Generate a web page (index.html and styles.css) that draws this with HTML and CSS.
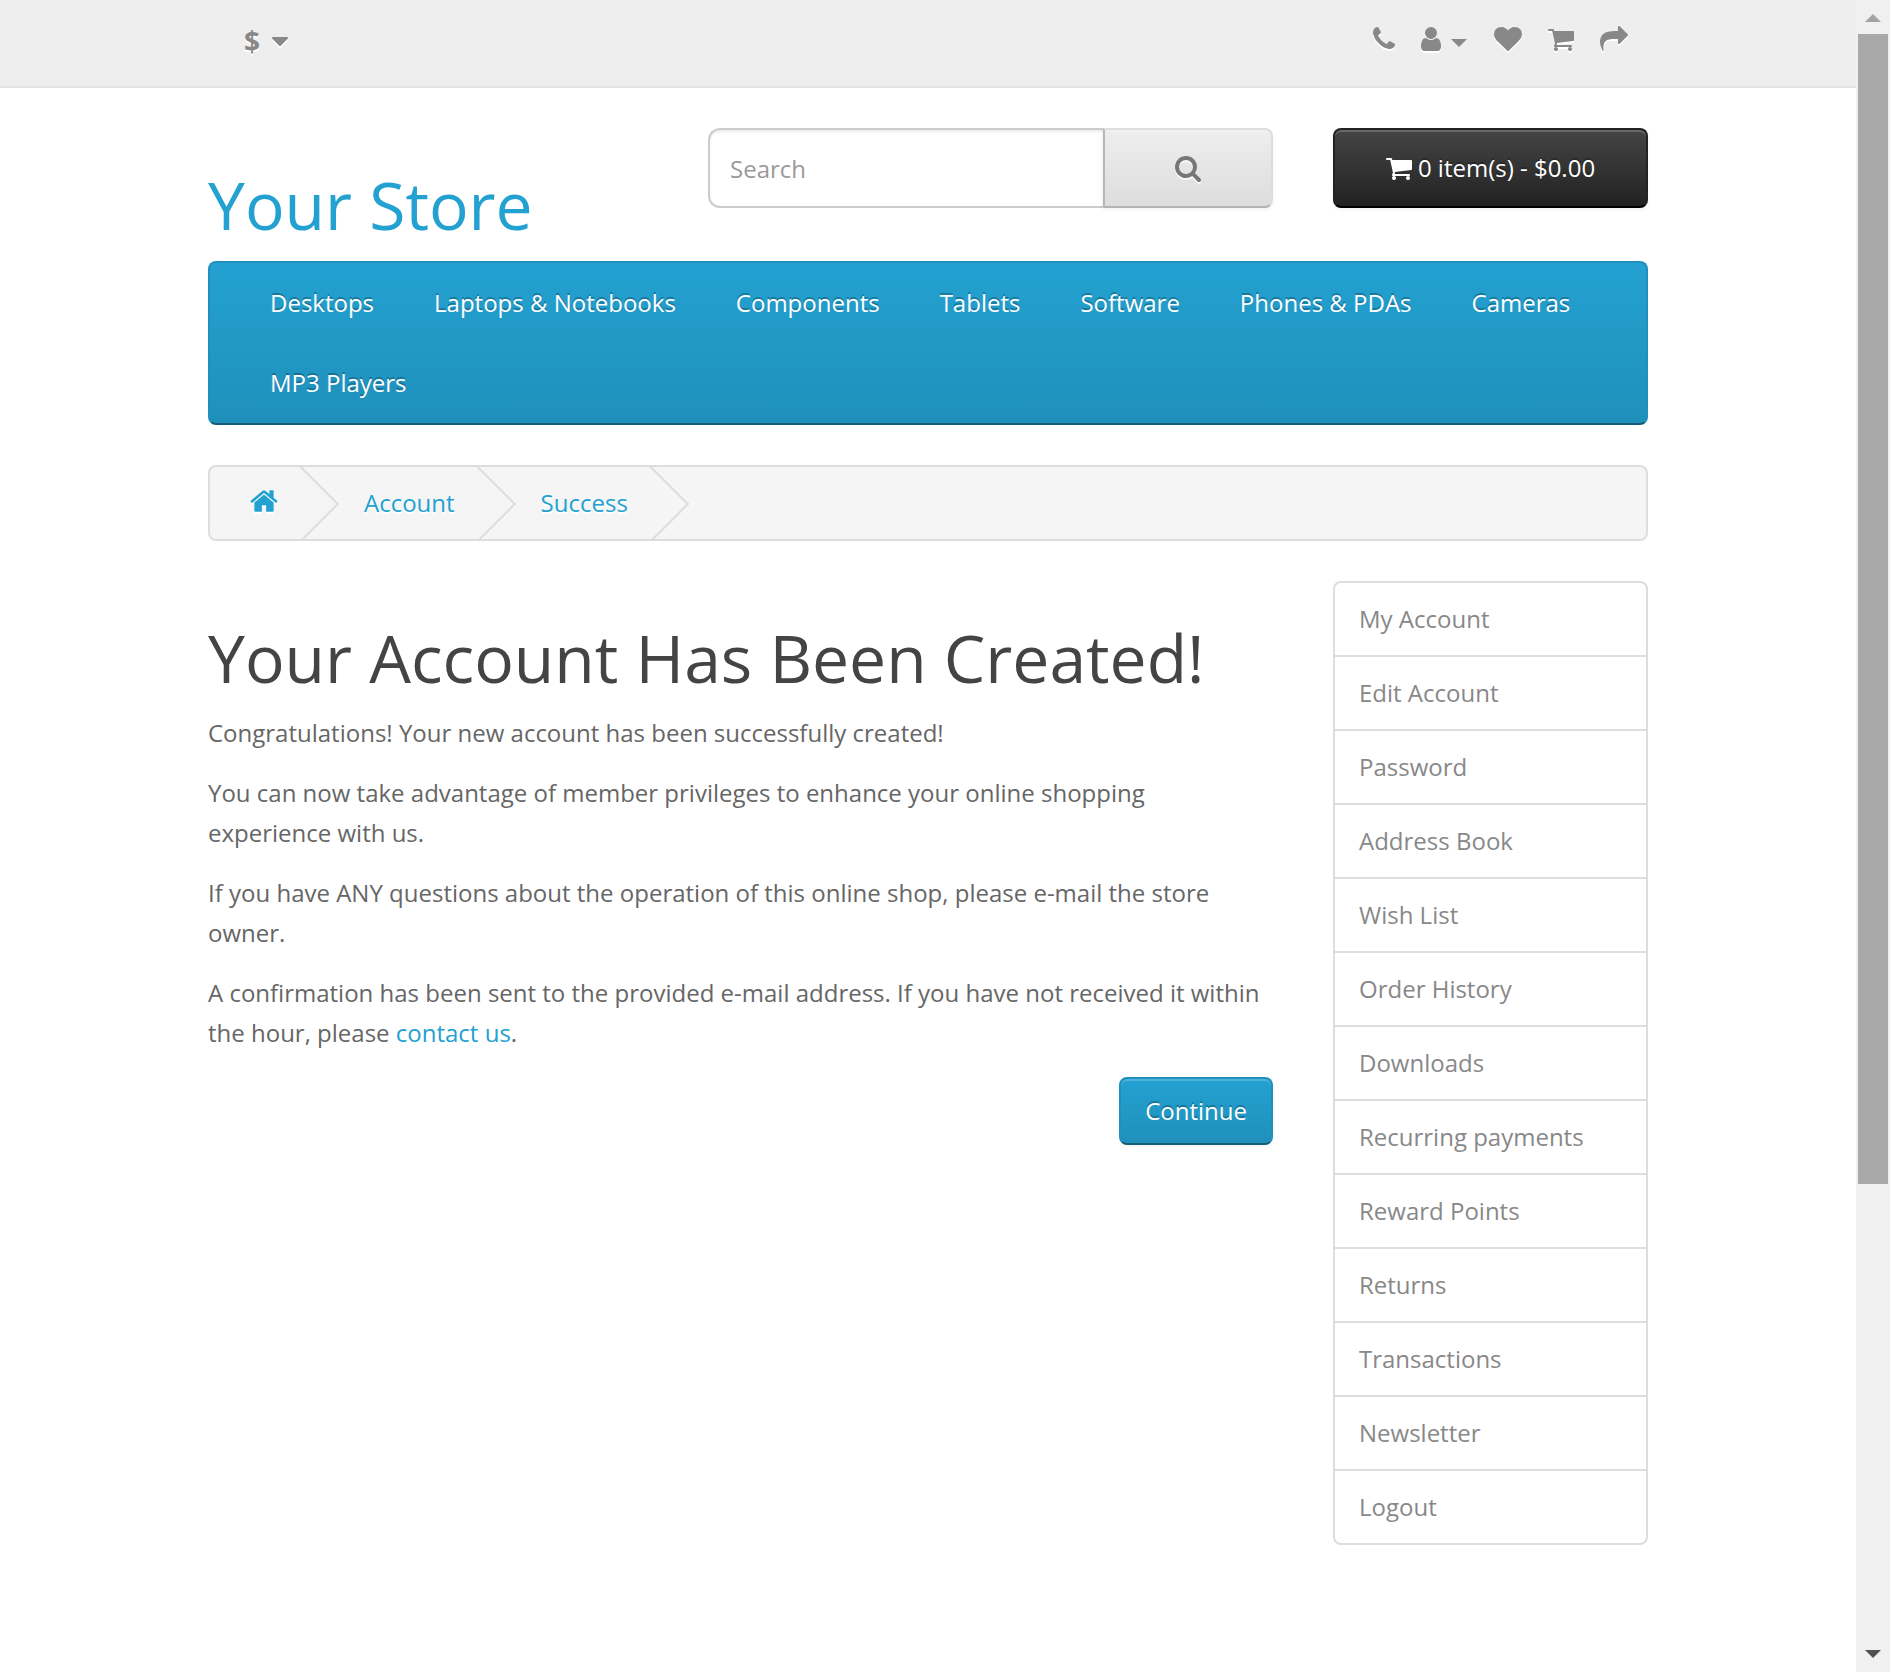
FILE: index.html
```html
<!DOCTYPE html>
<html lang="en">
<head>
<meta charset="utf-8">
<meta name="viewport" content="width=device-width, initial-scale=1">
<title>Your Account Has Been Created!</title>
<link rel="stylesheet" href="styles.css">
</head>
<body>
<svg class="sprite" aria-hidden="true">
  <symbol id="cart" viewBox="64 0 1664 1792"><path d="M704 1536q0 52-38 90t-90 38-90-38-38-90 38-90 90-38 90 38 38 90zm896 0q0 52-38 90t-90 38-90-38-38-90 38-90 90-38 90 38 38 90zm128-1088v512q0 24-16.500 42.500t-40.500 21.500l-1044 122q13 60 13 70 0 16-24 64h920q26 0 45 19t19 45-19 45-45 19h-1024q-26 0-45-19t-19-45q0-11 8-31.500t16-36 21.500-40 15.500-29.500l-177-823h-204q-26 0-45-19t-19-45 19-45 45-19h256q16 0 28.500 6.500t19.500 15.500 13 24.500 8 26 5.500 29.500 4.500 26h1201q26 0 45 19t19 45z"/></symbol>
</svg>

<div class="page">
  <nav class="top" aria-label="Account and currency">
    <div class="container top-row">
      <button class="currency" type="button" aria-label="Currency"><strong>$</strong>
        <svg class="caret-icon" viewBox="384 0 1024 1792" aria-hidden="true"><path d="M1408 704q0 26-19 45l-448 448q-19 19-45 19t-45-19l-448-448q-19-19-19-45t19-45 45-19h896q26 0 45 19t19 45z"/></svg>
      </button>
      <ul class="top-links">
        <li><a href="#contact" aria-label="Contact us"><svg class="icon-phone" viewBox="192 0 1408 1792"><path d="M1600 1240q0 27-10 70.500t-21 68.500q-21 50-122 106-94 51-186 51-27 0-53-3.500t-57.500-12.500-47-14.500-55.500-20.500-49-18q-98-35-175-83-127-79-264-216t-216-264q-48-77-83-175-3-9-18-49t-20.500-55.500-14.500-47-12.500-57.500-3.500-53q0-92 51-186 56-101 106-122 25-11 68.500-21t70.500-10q14 0 21 3 18 6 53 76 11 19 30 54t35 63.500 31 53.500q3 4 17.500 25t21.500 35.500 7 28.500q0 20-28.500 50t-62 55-62 53-28.500 46q0 9 5 22.500t8.500 20.500 14 24 11.500 19q76 137 174 235t235 174q2 1 19 11.500t24 14 20.500 8.500 22.500 5q18 0 46-28.500t53-62 55-62 50-28.500q14 0 28.500 7t35.500 21.500 25 17.500q25 15 53.500 31t63.500 35 54 30q70 35 76 53 3 7 3 21z"/></svg></a></li>
        <li><a href="#account" aria-label="My Account"><svg class="icon-user" viewBox="256 0 1280 1792"><path d="M1536 1399q0 109-62.500 187t-150.500 78h-854q-88 0-150.500-78t-62.500-187q0-85 8.500-160.500t31.500-152 58.500-131 94-89 134.500-34.500q131 128 313 128t313-128q76 0 134.500 34.500t94 89 58.500 131 31.500 152 8.500 160.500zm-256-887q0 159-112.500 271.500t-271.500 112.500-271.500-112.500-112.500-271.500 112.500-271.500 271.500-112.500 271.500 112.500 112.500 271.500z"/></svg><span class="caret"></span></a></li>
        <li><a href="#wishlist" aria-label="Wish List"><svg class="icon-wide" viewBox="0 0 1792 1792"><path d="M896 1664q-26 0-44-18l-624-602q-10-8-27.500-26t-55.500-65.500-68-97.500-53.500-121-23.500-138q0-220 127-344t351-124q62 0 126.500 21.500t120 58 95.500 68.500 76 68q36-36 76-68t95.500-68.500 120-58 126.500-21.500q224 0 351 124t127 344q0 221-229 450l-623 600q-18 18-44 18z"/></svg></a></li>
        <li><a href="#cart-page" aria-label="Shopping Cart"><svg class="icon"><use href="#cart"/></svg></a></li>
        <li><a href="#checkout" aria-label="Checkout"><svg class="icon-wide" viewBox="0 0 1792 1792"><path d="M1792 640q0 26-19 45l-512 512q-19 19-45 19t-45-19-19-45v-256h-224q-98 0-175.500 6t-154 21.500-133 42.500-105.500 69.500-80 101-48.500 138.500-17.500 181q0 55 5 123 0 6 2.500 23.500t2.500 26.500q0 15-8.500 25t-23.500 10q-16 0-28-17-7-9-13-22t-13.500-30-10.500-24q-127-285-127-451 0-199 53-333 162-403 875-403h224v-256q0-26 19-45t45-19 45 19l512 512q19 19 19 45z"/></svg></a></li>
      </ul>
    </div>
  </nav>

  <div class="container">
    <header class="header">
      <div class="logo"><a href="#home">Your Store</a></div>
      <form class="search" role="search">
        <input type="text" placeholder="Search" aria-label="Search">
        <button type="button" aria-label="Search"><svg class="icon" viewBox="64 0 1664 1792"><path d="M1216 832q0-185-131.500-316.500t-316.500-131.500-316.500 131.500-131.500 316.500 131.500 316.500 316.500 131.500 316.500-131.500 131.500-316.500zm512 832q0 52-38 90t-90 38q-54 0-90-38l-343-342q-179 124-399 124-143 0-273.500-55.500t-225-150-150-225-55.500-273.500 55.500-273.500 150-225 225-150 273.500-55.500 273.500 55.500 225 150 150 225 55.500 273.500q0 220-124 399l343 343q37 37 37 90z"/></svg></button>
      </form>
      <button class="cart-button" type="button"><svg class="icon"><use href="#cart"/></svg><span>0 item(s) - $0.00</span></button>
    </header>

    <nav class="menu" aria-label="Categories">
      <a href="#desktops">Desktops</a>
      <a href="#laptops">Laptops &amp; Notebooks</a>
      <a href="#components">Components</a>
      <a href="#tablets">Tablets</a>
      <a href="#software">Software</a>
      <a href="#phones">Phones &amp; PDAs</a>
      <a href="#cameras">Cameras</a>
      <a href="#mp3">MP3 Players</a>
    </nav>

    <ol class="breadcrumb">
      <li><a href="#home" aria-label="Home"><svg class="icon-home" viewBox="64 0 1664 1792"><path d="M1472 992v480q0 26-19 45t-45 19h-384v-384h-256v384h-384q-26 0-45-19t-19-45v-480q0-1 .5-3t.5-3l575-474 575 474q1 2 1 6zm223-69l-62 74q-8 9-21 11h-3q-13 0-21-7l-692-577-692 577q-12 8-24 7-13-2-21-11l-62-74q-8-10-7-23.500t11-21.500l719-599q32-26 76-26t76 26l244 204v-195q0-14 9-23t23-9h192q14 0 23 9t9 23v408l219 182q10 8 11 21.500t-7 23.500z"/></svg></a></li>
      <li><a href="#account">Account</a></li>
      <li><a href="#success">Success</a></li>
    </ol>

    <div class="columns">
      <main class="content">
        <h1>Your Account Has Been Created!</h1>
        <p>Congratulations! Your new account has been successfully created!</p>
        <p>You can now take advantage of member privileges to enhance your online shopping experience with us.</p>
        <p>If you have ANY questions about the operation of this online shop, please e-mail the store owner.</p>
        <p>A confirmation has been sent to the provided e-mail address. If you have not received it within the hour, please <a href="#contact">contact us</a>.</p>
        <div class="buttons"><a class="continue" href="#account">Continue</a></div>
      </main>
      <nav class="side" aria-label="Account">
        <a href="#my-account">My Account</a>
        <a href="#edit">Edit Account</a>
        <a href="#password">Password</a>
        <a href="#address">Address Book</a>
        <a href="#wishlist">Wish List</a>
        <a href="#orders">Order History</a>
        <a href="#downloads">Downloads</a>
        <a href="#recurring">Recurring payments</a>
        <a href="#rewards">Reward Points</a>
        <a href="#returns">Returns</a>
        <a href="#transactions">Transactions</a>
        <a href="#newsletter">Newsletter</a>
        <a href="#logout">Logout</a>
      </nav>
    </div>
  </div>
</div>

<div class="scrollbar" aria-hidden="true">
  <span class="arrow arrow-up"></span>
  <span class="thumb"></span>
  <span class="arrow arrow-down"></span>
</div>
</body>
</html>
```
FILE: styles.css
```css
* { box-sizing: border-box; }

body {
  margin: 0;
  display: flex;
  min-height: 100vh;
  background: #fff;
  color: #666;
  font: 24px/40px "Open Sans", "Noto Sans", sans-serif;
}

a { color: #23a1d1; text-decoration: none; }
button, input { font: inherit; margin: 0; }
button { cursor: pointer; }
svg { display: block; fill: currentColor; flex: none; }
ul, ol { list-style: none; margin: 0; padding: 0; }

.sprite { position: absolute; width: 0; height: 0; }
.page { flex: 1; min-width: 0; }
.container { max-width: 1500px; margin: 0 auto; padding: 0 30px; }

.icon { width: 26px; height: 28px; }
.icon-phone { width: 22px; height: 28px; }
.icon-user { width: 20px; height: 28px; }
.icon-wide { width: 28px; height: 28px; }
.icon-home { width: 28px; height: 30px; }

/* Top bar */
.top {
  min-height: 88px;
  margin-bottom: 40px;
  padding-top: 8px;
  background: #eee;
  border-bottom: 2px solid #e2e2e2;
}
.top-row { display: flex; justify-content: space-between; align-items: flex-start; }
.top svg { filter: drop-shadow(0 2px 0 #fff); }
.currency {
  display: flex;
  align-items: center;
  gap: 12px;
  padding: 15px 36px;
  border: 0;
  background: none;
  color: #888;
  font-size: 28px;
  line-height: 36px;
  text-shadow: 0 2px 0 #fff;
}
.caret-icon { width: 16px; height: 28px; }
.top-links { display: flex; gap: 26px; padding: 17px 20px 0 0; }
.top-links a { display: flex; align-items: flex-end; gap: 10px; color: #888; }
.caret {
  margin: 0 1px 6px 0;
  border-top: 8px solid #888;
  border-left: 8px solid transparent;
  border-right: 8px solid transparent;
}

/* Header */
.header {
  display: grid;
  grid-template-columns: 440fr 565fr 315fr;
  gap: 60px;
  align-items: start;
  margin-bottom: 20px;
}
.logo { padding-top: 40px; font-size: 66px; line-height: 73px; }
.search { display: flex; }
.search input {
  flex: 1;
  min-width: 0;
  height: 80px;
  padding: 0 20px;
  border: 2px solid #ccc;
  border-right: 0;
  border-radius: 12px 0 0 12px;
  background: #fff;
  box-shadow: inset 0 2px 2px rgba(0, 0, 0, .075);
  color: #555;
}
.search input::placeholder { color: #999; opacity: 1; }
.search button {
  display: flex;
  align-items: center;
  justify-content: center;
  width: 170px;
  height: 80px;
  padding: 0;
  border: 2px solid;
  border-color: #ddd #ddd #b3b3b3 #b7b7b7;
  border-radius: 0 8px 8px 0;
  background: linear-gradient(#eee, #ddd);
  box-shadow: inset 0 2px 0 rgba(255, 255, 255, .2), 0 2px 4px rgba(0, 0, 0, .05);
  color: #777;
}
.search svg { filter: drop-shadow(0 2px 0 rgba(255, 255, 255, .8)); }
.cart-button {
  display: flex;
  align-items: center;
  justify-content: center;
  gap: 6px;
  height: 80px;
  padding: 0 20px;
  border: 2px solid;
  border-color: #222 #222 #000;
  border-radius: 8px;
  background: linear-gradient(#444, #222);
  box-shadow: inset 0 2px 0 rgba(255, 255, 255, .2), 0 2px 4px rgba(0, 0, 0, .05);
  color: #fff;
  text-shadow: 0 -2px 0 rgba(0, 0, 0, .25);
}

/* Category menu */
.menu {
  display: flex;
  flex-wrap: wrap;
  margin-bottom: 40px;
  padding: 0 30px;
  border: 2px solid;
  border-color: #1f90bb #1f90bb #145e7a;
  border-radius: 8px;
  background: linear-gradient(#23a1d1, #1f90bb);
}
.menu a {
  padding: 20px 30px;
  color: #fff;
  text-shadow: 0 -2px 0 rgba(0, 0, 0, .25);
}

/* Breadcrumb */
.breadcrumb {
  display: flex;
  gap: 6px;
  margin-bottom: 40px;
  border: 2px solid #ddd;
  border-radius: 8px;
  background: #f5f5f5;
  overflow: hidden;
}
.breadcrumb li {
  position: relative;
  padding: 16px 40px;
  height: 72px;
  text-shadow: 0 2px 0 #fff;
}
.breadcrumb li::after {
  content: "";
  position: absolute;
  top: 10px;
  right: -10px;
  width: 52px;
  height: 52px;
  border-top: 2px solid #ddd;
  border-right: 2px solid #ddd;
  transform: rotate(45deg);
}
.breadcrumb a { display: block; }
.breadcrumb svg { margin-top: 3px; filter: drop-shadow(0 2px 0 #fff); }

/* Main columns */
.columns {
  display: grid;
  grid-template-columns: 1065fr 315fr;
  gap: 60px;
  align-items: start;
}
h1 {
  margin: 40px 0 20px;
  color: #444;
  font-size: 66px;
  font-weight: 400;
  line-height: 72px;
}
p { margin: 0 0 20px; }
.buttons { display: flex; justify-content: flex-end; margin: 24px 0; }
.continue {
  padding: 14px 24px;
  border: 2px solid;
  border-color: #1f90bb #1f90bb #145e7a;
  border-radius: 8px;
  background: linear-gradient(#23a1d1, #1f90bb);
  box-shadow: inset 0 2px 0 rgba(255, 255, 255, .2), 0 2px 4px rgba(0, 0, 0, .05);
  color: #fff;
  line-height: 36px;
  text-shadow: 0 -2px 0 rgba(0, 0, 0, .25);
}

.side { border: 2px solid #ddd; border-radius: 8px; }
.side a { display: block; padding: 16px 24px; color: #888; }
.side a + a { border-top: 2px solid #ddd; }

/* Scroll bar */
.scrollbar {
  position: sticky;
  top: 0;
  display: grid;
  grid-template-rows: 34px 1150fr 454fr 34px;
  width: 34px;
  height: 100vh;
  padding: 0 2px;
  background: #f0f0f0;
}
.thumb { background: #a8a8a8; }
.arrow { justify-self: center; border: 8px solid transparent; }
.arrow-up { align-self: end; margin-bottom: 12px; border-top: 0; border-bottom-color: #a3a3a3; }
.arrow-down { grid-row: 4; align-self: start; margin-top: 12px; border-bottom: 0; border-top-color: #505050; }
```
